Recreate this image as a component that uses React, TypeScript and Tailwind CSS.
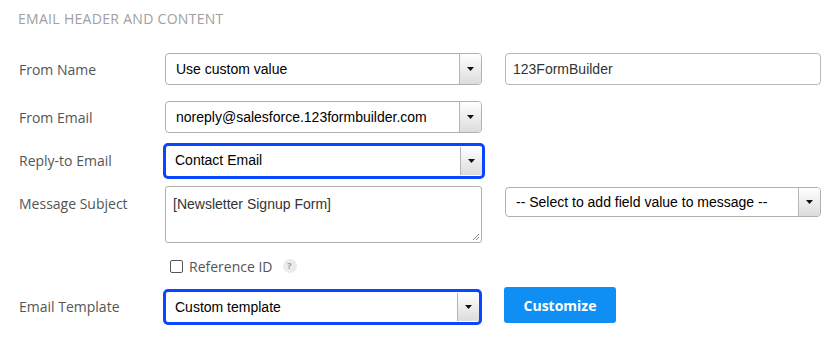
import React from "react";

const Arrow = () => (
  <div className="w-[22px] self-stretch border-l border-[#b5b5b5] bg-gradient-to-b from-[#ffffff] to-[#dcdcdc] flex items-center justify-center rounded-r-[3px]">
    <svg width="7" height="4" viewBox="0 0 7 4">
      <path d="M0 0 L7 0 L3.5 4 Z" fill="#111" />
    </svg>
  </div>
);

const Select = ({ text, h = 32 }: { text: string; h?: number }) => (
  <div
    className="flex items-stretch border border-[#b0b0b0] rounded-[4px] bg-white"
    style={{ height: h }}
  >
    <div className="flex-1 flex items-center pl-[10px] text-[14px] text-black font-['Liberation_Sans',Arial,sans-serif] whitespace-nowrap overflow-hidden">
      {text}
    </div>
    <Arrow />
  </div>
);

const BlueSelect = ({ text, w }: { text: string; w: number }) => (
  <div
    className="h-[36px] border-[3px] border-[#0a45ff] rounded-[5px] bg-white flex items-stretch"
    style={{ width: w }}
  >
    <div className="flex-1 flex items-center pl-[9px] text-[14px] text-black font-['Liberation_Sans',Arial,sans-serif] whitespace-nowrap">
      {text}
    </div>
    <div className="w-[22px] my-[1px] border-l border-[#b5b5b5] bg-gradient-to-b from-[#ffffff] to-[#dcdcdc] flex items-center justify-center">
      <svg width="7" height="4" viewBox="0 0 7 4">
        <path d="M0 0 L7 0 L3.5 4 Z" fill="#111" />
      </svg>
    </div>
  </div>
);

const Label = ({ children, className = "" }: { children: React.ReactNode; className?: string }) => (
  <div className={"w-[165px] pl-[19px] text-[14px] text-[#555] font-['Open_Sans',sans-serif] " + className}>
    {children}
  </div>
);

export default function App() {
  return (
    <div className="w-[826px] h-[354px] bg-white font-['Open_Sans',sans-serif] overflow-hidden">
      <div className="pl-[18px] pt-[8px] h-[53px] text-[14px] text-[#a0a0a0] tracking-[0.3px]">
        EMAIL HEADER AND CONTENT
      </div>

      {/* From Name */}
      <div className="flex items-center h-[32px]">
        <Label>From Name</Label>
        <div className="w-[317px]">
          <Select text="Use custom value" />
        </div>
        <div className="ml-[23px] w-[316px] h-[32px] border border-[#b8b8b8] rounded-[4px] flex items-center pl-[7px] text-[14px] text-[#333] font-['Liberation_Sans',Arial,sans-serif]">
          123FormBuilder
        </div>
      </div>

      {/* From Email */}
      <div className="flex items-center h-[32px] mt-[16px]">
        <Label>From Email</Label>
        <div className="w-[317px]">
          <Select text="noreply@salesforce.123formbuilder.com" />
        </div>
      </div>

      {/* Reply-to */}
      <div className="flex items-center h-[35px] mt-[10px]">
        <Label className="-mt-[1px]">Reply-to Email</Label>
        <div className="-ml-[2px]">
          <BlueSelect text="Contact Email" w={322} />
        </div>
      </div>

      {/* Message Subject */}
      <div className="flex items-start mt-[8px]">
        <Label className="pt-[7px]">Message Subject</Label>
        <div className="relative w-[317px] h-[57px] border border-[#b0b0b0] rounded-[3px] pl-[7px] pt-[7px] text-[14px] text-[#333] font-['Liberation_Sans',Arial,sans-serif]">
          [Newsletter Signup Form]
          <svg className="absolute right-[1px] bottom-[1px]" width="9" height="9" viewBox="0 0 9 9">
            <path d="M8 2 L2 8 M8 5 L5 8" stroke="#888" strokeWidth="1" />
          </svg>
        </div>
        <div className="ml-[23px] mt-[1px] w-[316px]">
          <Select text="-- Select to add field value to message --" h={30} />
        </div>
      </div>

      {/* Reference ID */}
      <div className="flex items-center h-[20px] mt-[13px] pl-[170px]">
        <div className="w-[13px] h-[13px] border border-[#555] rounded-[2px] bg-white" />
        <span className="ml-[6px] text-[14px] text-[#555]">Reference ID</span>
        <span className="ml-[10px] w-[14px] h-[14px] rounded-full bg-[#ebebeb] text-[#999] text-[9px] font-bold flex items-center justify-center">
          ?
        </span>
      </div>

      {/* Email Template */}
      <div className="flex items-start mt-[11px]">
        <Label className="pt-[9px]">Email Template</Label>
        <div className="-ml-[2px] mt-[2px]">
          <BlueSelect text="Custom template" w={319} />
        </div>
        <button className="ml-[22px] w-[112px] h-[36px] rounded-[3px] bg-[#0f8ff3] text-white text-[14px] font-bold font-['Open_Sans',sans-serif]">
          Customize
        </button>
      </div>
    </div>
  );
}
